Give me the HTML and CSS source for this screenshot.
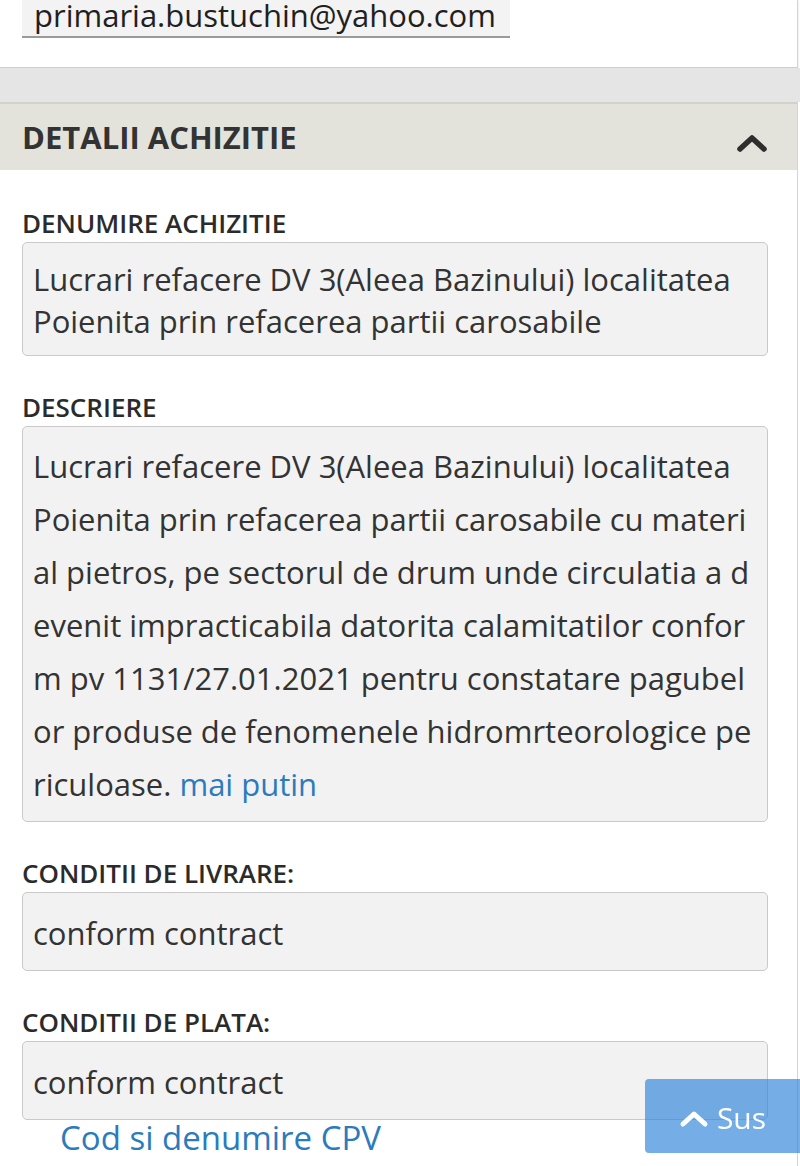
FILE: index.html
```html
<!DOCTYPE html>
<html lang="ro">
<head>
<meta charset="utf-8">
<title>Detalii achizitie</title>
<link rel="stylesheet" href="styles.css">
</head>
<body>
<div class="page">
  <section class="card card-top">
    <div class="email-field">primaria.bustuchin@yahoo.com</div>
  </section>
  <div class="gap"></div>
  <section class="card">
    <header class="panel-head">
      <h2 class="panel-title">DETALII ACHIZITIE</h2>
      <svg class="chev" width="30" height="18" viewBox="0 0 30 18" aria-hidden="true">
        <polyline points="3,15 15,4 27,15" fill="none" stroke="#2e2e2e" stroke-width="5.5" stroke-linecap="round" stroke-linejoin="round"/>
      </svg>
    </header>
    <div class="panel-body">
      <div class="label">DENUMIRE ACHIZITIE</div>
      <div class="box box-name">Lucrari refacere DV 3(Aleea Bazinului) localitatea<br>Poienita prin refacerea partii carosabile</div>

      <div class="label">DESCRIERE</div>
      <div class="box box-desc">Lucrari refacere DV 3(Aleea Bazinului) localitatea<br>Poienita prin refacerea partii carosabile cu materi<br>al pietros, pe sectorul de drum unde circulatia a d<br>evenit impracticabila datorita calamitatilor confor<br>m pv 1131/27.01.2021 pentru constatare pagubel<br>or produse de fenomenele hidromrteorologice pe<br>riculoase. <a class="link" href="#">mai putin</a></div>

      <div class="label">CONDITII DE LIVRARE:</div>
      <div class="box box-single">conform contract</div>

      <div class="label">CONDITII DE PLATA:</div>
      <div class="box box-single box-last">conform contract</div>

      <a class="link cpv" href="#">Cod si denumire CPV</a>
    </div>
  </section>
</div>
<a class="to-top" href="#">
  <svg width="30" height="18" viewBox="0 0 30 18" aria-hidden="true">
    <polyline points="4,14 15,4 26,14" fill="none" stroke="#ffffff" stroke-width="5" stroke-linecap="round" stroke-linejoin="round"/>
  </svg>
  <span>Sus</span>
</a>
</body>
</html>
```

FILE: styles.css
```css
* { box-sizing: border-box; }
html, body { margin: 0; padding: 0; }
body {
  font-family: "Open Sans", "Noto Sans", sans-serif;
  color: #333;
  background: #fff;
  width: 800px;
  height: 1166px;
  overflow: hidden;
}
.page { width: 800px; }
.card {
  background: #fff;
  margin-right: 2px;
  border-right: 1px solid #d4d4d4;
}
.card-top {
  height: 68px;
  border-bottom: 1px solid #cfcfcf;
  box-shadow: 0 1px 2px rgba(0,0,0,0.15);
}
.email-field {
  margin-left: 22px;
  width: 488px;
  height: 38px;
  background: #f3f3f3;
  border-bottom: 2px solid #9a9a9a;
  padding-left: 12px;
  font-size: 31px;
  line-height: 30px;
  color: #1f1f1f;
}
.gap {
  height: 34px;
  background: #e5e5e5;
}
.panel-head {
  height: 68px;
  background: #e3e3dc;
  border-top: 2px solid #d2d2cc;
  display: flex;
  align-items: center;
  justify-content: space-between;
  padding: 0 30px 0 22px;
}
.panel-title {
  margin: 0;
  font-size: 31px;
  font-weight: 700;
  color: #333;
  line-height: 36px;
}
.chev { display: block; margin-top: 12px; }
.panel-body {
  padding: 38px 0 40px 0;
}
.label {
  font-size: 26px;
  font-weight: 600;
  line-height: 30px;
  margin-left: 22px;
  margin-bottom: 4px;
  color: #2b2b2b;
}
.box {
  margin-left: 22px;
  width: 746px;
  background: #f2f2f2;
  border: 1px solid #c9c9c9;
  border-radius: 5px;
  font-size: 31px;
  color: #333;
  padding-left: 10px;
  margin-bottom: 36px;
  white-space: nowrap;
}
.box-name { line-height: 42px; padding-top: 15px; padding-bottom: 13px; }
.box-desc { line-height: 53px; padding-top: 13px; padding-bottom: 10px; }
.box-single { line-height: 42px; padding-top: 19px; padding-bottom: 16px; }
.box-last { margin-bottom: 0; }
.link { color: #2b7bbd; text-decoration: none; }
.cpv {
  display: block;
  margin-top: 0;
  margin-left: 60px;
  font-size: 33px;
  line-height: 36px;
}
.to-top {
  position: fixed;
  right: 0;
  bottom: 13px;
  width: 155px;
  height: 74px;
  background: rgba(45, 132, 218, 0.66);
  border-radius: 4px 0 0 4px;
  display: flex;
  align-items: center;
  justify-content: center;
  gap: 8px;
  color: #fff;
  text-decoration: none;
  font-size: 30px;
  padding-top: 2px;
}
.to-top svg { display: block; margin-top: 4px; }
```
